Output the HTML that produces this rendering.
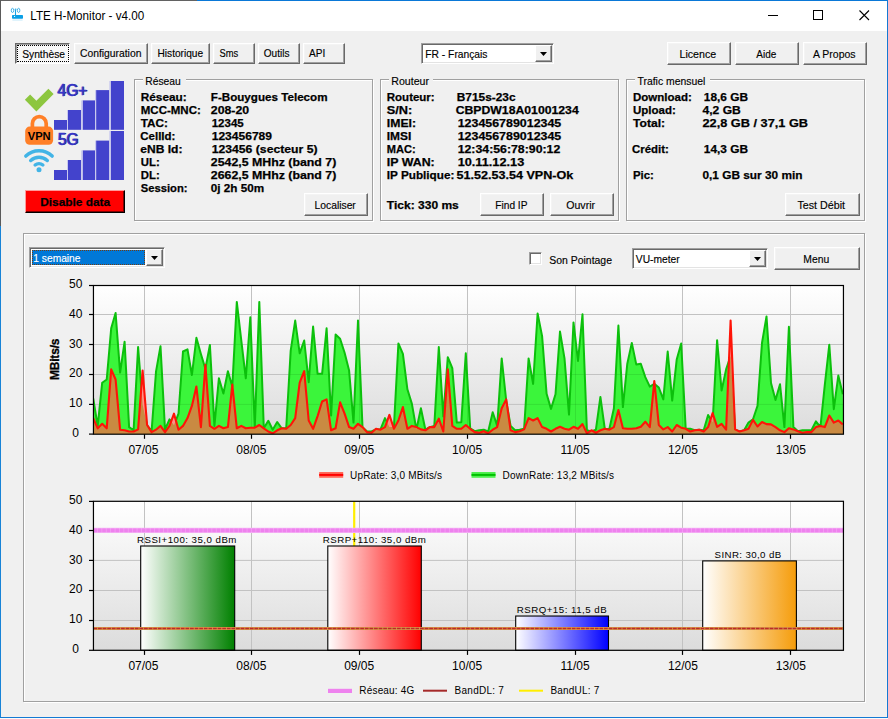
<!DOCTYPE html>
<html lang="fr"><head><meta charset="utf-8"><title>LTE H-Monitor - v4.00</title>
<style>
html,body{margin:0;padding:0}
body{width:888px;height:719px;overflow:hidden;position:relative;background:#f0f0f0;font-family:"Liberation Sans",sans-serif;font-size:11px;color:#000}
.t{position:absolute;white-space:pre;line-height:normal}
.a{position:absolute;box-sizing:border-box}
.btn{position:absolute;box-sizing:border-box;background:#f0f0f0;border:1px solid;border-color:#fff #696969 #696969 #fff;box-shadow:inset -1px -1px 0 #a0a0a0,inset 1px 1px 0 #f4f4f4}
.sunk{position:absolute;box-sizing:border-box;background:#fff;border:1px solid;border-color:#a0a0a0 #fff #fff #a0a0a0;box-shadow:inset 1px 1px 0 #696969,inset -1px -1px 0 #e3e3e3}
.gb{position:absolute;box-sizing:border-box;border:1px solid #a0a0a0;box-shadow:1px 1px 0 #fff,inset 1px 1px 0 #fff}
.gl{position:absolute;background:#f0f0f0;height:12px}
.dd{position:absolute;box-sizing:border-box;background:#f0f0f0;border:1px solid;border-color:#fff #696969 #696969 #fff;box-shadow:inset -1px -1px 0 #a0a0a0}
.dd:after{content:"";position:absolute;left:4px;top:6px;width:7px;height:4px;background:#000;clip-path:polygon(0 0,100% 0,50% 100%)}
svg{position:absolute;left:0;top:0}
</style></head><body>

<div class="a" style="left:0;top:0;width:888px;height:31px;background:#fff"></div>
<div class="a" style="left:0;top:0;width:197px;height:1px;background:#626262"></div>
<div class="a" style="left:197px;top:0;width:691px;height:1px;background:#0a78d7"></div>
<div class="a" style="left:0;top:0;width:1px;height:226px;background:#5a5a5a"></div>
<div class="a" style="left:0;top:226px;width:1px;height:492px;background:#1883d7"></div>
<div class="a" style="left:887px;top:0;width:1px;height:718px;background:#1479d3"></div>
<div class="a" style="left:886px;top:31px;width:1px;height:686px;background:#f6f2f0"></div>
<div class="a" style="left:0;top:717px;width:888px;height:1px;background:#1479d3"></div>
<div class="a" style="left:0;top:718px;width:888px;height:1px;background:#fbfbfb"></div>

<div class="a" style="left:15px;top:43px;width:55px;height:21px;background:#f8f8f8;border:1px solid;border-color:#696969 #fff #fff #696969;box-shadow:inset 1px 1px 0 #a0a0a0"></div>
<div class="a" style="left:17px;top:45px;width:52px;height:17px;border:1px dotted #000"></div>

<div class="btn" style="left:74px;top:43px;width:74px;height:21px"></div>

<div class="btn" style="left:151px;top:43px;width:59px;height:21px"></div>

<div class="btn" style="left:213px;top:43px;width:42px;height:21px"></div>

<div class="btn" style="left:258px;top:43px;width:42px;height:21px"></div>

<div class="btn" style="left:303px;top:43px;width:42px;height:21px"></div>

<div class="sunk" style="left:421px;top:43px;width:133px;height:21px"></div>
<div class="dd" style="left:535px;top:45px;width:17px;height:17px"></div>

<div class="btn" style="left:667px;top:42px;width:64px;height:23px"></div>

<div class="btn" style="left:735px;top:42px;width:64px;height:23px"></div>

<div class="btn" style="left:803px;top:42px;width:64px;height:23px"></div>

<div class="gb" style="left:134px;top:79px;width:239px;height:142px"></div>
<div class="gl" style="left:143px;top:75px;width:43px"></div>

<div class="gb" style="left:380px;top:79px;width:239px;height:142px"></div>
<div class="gl" style="left:389px;top:75px;width:43.7px"></div>

<div class="gb" style="left:626px;top:79px;width:239px;height:142px"></div>
<div class="gl" style="left:635.3px;top:75px;width:74.7px"></div>










































<div class="btn" style="left:304px;top:193px;width:64px;height:23px"></div>

<div class="btn" style="left:480px;top:193px;width:64px;height:23px"></div>

<div class="btn" style="left:550px;top:193px;width:64px;height:23px"></div>

<div class="btn" style="left:785px;top:193px;width:75px;height:23px"></div>

<div class="a" style="left:25px;top:190px;width:100px;height:23px;background:#ff0000;border:1px solid;border-color:#ff9a9a #000 #000 #ff9a9a;box-shadow:inset -1px -1px 0 #800000"></div>

<div class="gb" style="left:23px;top:233px;width:842px;height:469px"></div>
<div class="sunk" style="left:29px;top:247px;width:136px;height:21px"></div>
<div class="a" style="left:32px;top:250px;width:113px;height:15px;background:#0078d7;border:1px dotted #ff8728;outline:0"></div>
<div class="a" style="left:32px;top:250px;width:113px;height:15px;border:1px dotted #000;clip-path:none;opacity:0.55"></div>
<div class="dd" style="left:146px;top:249px;width:17px;height:17px"></div>

<div class="sunk" style="left:529px;top:252px;width:13px;height:13px"></div>

<div class="sunk" style="left:632px;top:248px;width:136px;height:21px"></div>
<div class="dd" style="left:749px;top:250px;width:17px;height:17px"></div>

<div class="btn" style="left:774px;top:247px;width:86px;height:23px"></div>

<svg width="888" height="719" viewBox="0 0 888 719" font-family="Liberation Sans, sans-serif">
<defs>
<linearGradient id="bg" x1="0" y1="0" x2="0" y2="1"><stop offset="0" stop-color="#ffffff"/><stop offset="1" stop-color="#dcdcdc"/></linearGradient>
<linearGradient id="gg" x1="0" y1="0" x2="1" y2="0"><stop offset="0" stop-color="#ffffff"/><stop offset="1" stop-color="#008000"/></linearGradient>
<linearGradient id="gr" x1="0" y1="0" x2="1" y2="0"><stop offset="0" stop-color="#ffffff"/><stop offset="1" stop-color="#ff0000"/></linearGradient>
<linearGradient id="gbl" x1="0" y1="0" x2="1" y2="0"><stop offset="0" stop-color="#ffffff"/><stop offset="1" stop-color="#0000ff"/></linearGradient>
<linearGradient id="go" x1="0" y1="0" x2="1" y2="0"><stop offset="0" stop-color="#ffffff"/><stop offset="1" stop-color="#f59c0a"/></linearGradient>
</defs>
<g fill="none" stroke="#1ba1e2">
<rect x="12" y="15" width="11" height="3.7" rx="0.7" fill="#0a9fe6" stroke="none"/>
<rect x="12.4" y="19.2" width="10.2" height="1.8" fill="#dff3fc" stroke="none"/>
<rect x="14" y="15.9" width="1.1" height="1" fill="#fff" stroke="none"/>
<path d="M15.5 9.3 V15.2" stroke-width="1.1"/>
<ellipse cx="12.5" cy="10.4" rx="1.25" ry="2.1" stroke-width="0.8"/>
<ellipse cx="18.6" cy="10.4" rx="1.25" ry="2.1" stroke-width="0.8"/>
<path d="M14.6 9.3 Q14.9 8.7 15.5 9 Q16.1 8.7 16.5 9.3" stroke-width="0.8"/>
</g>
<g stroke="#000" stroke-width="1" fill="none" shape-rendering="crispEdges">
<path d="M768 15.5 H778"/>
<rect x="813.5" y="10.5" width="9" height="9"/>
</g>
<path d="M859.5 10.5 L869 20 M869 10.5 L859.5 20" stroke="#000" stroke-width="1.1" fill="none"/>
<polygon points="24.9,99.75 30.1,94.5 36.4,100.75 48.4,88.75 53.6,94.1 36.4,111.6" fill="#8dc63f"/>
<rect x="54" y="81" width="70" height="0" fill="#dcdcf4"/>
<rect x="54" y="120" width="13" height="9.8" fill="#4343cc"/>
<rect x="68" y="110" width="13.1" height="19.8" fill="#4343cc"/>
<rect x="82.6" y="100.4" width="12.4" height="29.4" fill="#4343cc"/>
<rect x="96.1" y="90.1" width="13.2" height="39.7" fill="#4343cc"/>
<rect x="110.7" y="81" width="13.3" height="48.8" fill="#4343cc"/>
<rect x="67" y="110" width="1" height="19.8" fill="#c9c9ee"/>
<rect x="81.1" y="100.4" width="1.5" height="29.4" fill="#c9c9ee"/>
<rect x="95" y="90.1" width="1.1" height="39.7" fill="#c9c9ee"/>
<rect x="109.3" y="81" width="1.4" height="48.8" fill="#c9c9ee"/>
<rect x="54" y="131" width="70" height="0" fill="#dcdcf4"/>
<rect x="54" y="170" width="13" height="10" fill="#4343cc"/>
<rect x="68" y="160" width="13.1" height="20" fill="#4343cc"/>
<rect x="82.6" y="150.4" width="12.4" height="29.6" fill="#4343cc"/>
<rect x="96.1" y="140.6" width="13.2" height="39.4" fill="#4343cc"/>
<rect x="110.7" y="131" width="13.3" height="49" fill="#4343cc"/>
<rect x="67" y="160" width="1" height="20" fill="#c9c9ee"/>
<rect x="81.1" y="150.4" width="1.5" height="29.6" fill="#c9c9ee"/>
<rect x="95" y="140.6" width="1.1" height="39.4" fill="#c9c9ee"/>
<rect x="109.3" y="131" width="1.4" height="49" fill="#c9c9ee"/>
<path d="M32.4 128 V123.5 A6.9 6.9 0 0 1 46.2 123.5 V128" fill="none" stroke="#ff7f27" stroke-width="3.7"/>
<rect x="25.2" y="126.6" width="27.9" height="18.2" rx="4.5" fill="#ff7f27"/>
<text x="39.2" y="140" font-size="11" font-weight="bold" text-anchor="middle" fill="#000" textLength="23" lengthAdjust="spacingAndGlyphs">VPN</text>
<g fill="none" stroke="#42b4e6" stroke-width="3.5" stroke-linecap="round">
<path d="M25.85 156.04 A19 19 0 0 1 52.15 156.04"/>
<path d="M30.75 160.49 A12.4 12.4 0 0 1 47.25 160.49"/>
<path d="M35.16 165.01 A6.1 6.1 0 0 1 42.84 165.01"/>
</g>
<circle cx="39" cy="169.75" r="2.5" fill="#42b4e6"/>
<rect x="93.45" y="285.5" width="750" height="148.7" fill="url(#bg)"/>
<path d="M93.45 314.50 H843.45" stroke="#c2c2c2" stroke-width="1"/>
<path d="M93.45 344.50 H843.45" stroke="#c2c2c2" stroke-width="1"/>
<path d="M93.45 374.50 H843.45" stroke="#c2c2c2" stroke-width="1"/>
<path d="M93.45 404.40 H843.45" stroke="#c2c2c2" stroke-width="1"/>
<path d="M144.50 285.5 V434.2" stroke="#c2c2c2" stroke-width="1"/>
<path d="M251.50 285.5 V434.2" stroke="#c2c2c2" stroke-width="1"/>
<path d="M359.50 285.5 V434.2" stroke="#c2c2c2" stroke-width="1"/>
<path d="M467.50 285.5 V434.2" stroke="#c2c2c2" stroke-width="1"/>
<path d="M575.50 285.5 V434.2" stroke="#c2c2c2" stroke-width="1"/>
<path d="M682.50 285.5 V434.2" stroke="#c2c2c2" stroke-width="1"/>
<path d="M790.50 285.5 V434.2" stroke="#c2c2c2" stroke-width="1"/>
<clipPath id="cp"><rect x="93.45" y="283.5" width="750" height="150.7"/></clipPath><g clip-path="url(#cp)">
<clipPath id="cg"><polygon points="93.45,434.2 93.2,398.5 97.7,425.9 102.2,382.7 106.7,379.5 111.2,328.3 115.6,312.9 120.1,372.6 124.6,341.7 129.1,427.1 133.6,430.3 138.1,347.1 142.6,404.5 147.1,425.3 151.6,431.2 156.0,371.7 160.5,346.2 165.0,429.4 169.5,419.3 174.0,425.3 178.5,413.7 183.0,351.5 187.5,349.4 191.9,375.0 196.4,337.8 200.9,353.9 205.4,368.8 209.9,345.0 214.4,425.9 218.9,378.3 223.4,393.5 227.9,371.2 232.3,386.6 236.8,301.9 241.3,340.5 245.8,378.3 250.3,317.3 254.8,427.1 259.3,301.9 263.8,428.3 268.3,420.8 272.7,429.7 277.2,422.0 281.7,428.3 286.2,428.3 290.7,350.6 295.2,320.6 299.7,353.3 304.2,340.5 308.7,382.2 313.1,326.5 317.6,373.8 322.1,373.8 326.6,328.3 331.1,415.5 335.6,334.6 340.1,338.7 344.6,352.7 349.1,370.6 353.5,422.6 358.0,320.6 362.5,427.1 367.0,431.5 371.5,431.5 376.0,429.4 380.5,429.4 385.0,418.1 389.4,427.1 393.9,427.1 398.4,343.5 402.9,353.9 407.4,389.3 411.9,403.9 416.4,429.7 420.9,408.3 425.4,429.7 429.8,427.1 434.3,425.9 438.8,347.1 443.3,416.4 447.8,357.2 452.3,368.2 456.8,422.6 461.3,422.3 465.8,353.3 470.2,428.3 474.7,431.2 479.2,430.3 483.7,429.7 488.2,431.5 492.7,412.2 497.2,425.9 501.7,358.4 506.2,400.6 510.6,425.9 515.1,430.3 519.6,429.7 524.1,428.8 528.6,358.4 533.1,383.9 537.6,313.5 542.1,336.1 546.6,393.8 551.0,408.9 555.5,394.3 560.0,331.6 564.5,358.4 569.0,414.6 573.5,322.4 578.0,361.0 582.5,314.3 586.9,430.3 591.4,431.5 595.9,429.7 600.4,397.0 604.9,429.7 609.4,428.8 613.9,408.3 618.4,325.6 622.9,407.1 627.3,363.7 631.8,342.9 636.3,364.6 640.8,363.7 645.3,377.1 649.8,386.6 654.3,383.9 658.8,387.5 663.3,399.4 667.7,351.5 672.2,400.6 676.7,359.6 681.2,343.5 685.7,428.8 690.2,428.8 694.7,430.3 699.2,429.7 703.7,430.3 708.1,414.9 712.6,422.6 717.1,340.2 721.6,390.5 726.1,369.4 730.6,356.0 735.1,429.7 739.6,431.5 744.1,430.3 748.5,422.6 753.0,419.3 757.5,405.9 762.0,342.9 766.5,316.4 771.0,383.0 775.5,400.0 780.0,384.2 784.4,427.1 788.9,326.8 793.4,427.1 797.9,431.2 802.4,430.3 806.9,430.3 811.4,430.3 815.9,421.4 820.4,427.1 824.8,384.8 829.3,344.7 833.8,409.2 838.3,375.6 842.8,394.3 843.45,434.2"/></clipPath>
<polygon points="93.45,434.2 93.2,398.5 97.7,425.9 102.2,382.7 106.7,379.5 111.2,328.3 115.6,312.9 120.1,372.6 124.6,341.7 129.1,427.1 133.6,430.3 138.1,347.1 142.6,404.5 147.1,425.3 151.6,431.2 156.0,371.7 160.5,346.2 165.0,429.4 169.5,419.3 174.0,425.3 178.5,413.7 183.0,351.5 187.5,349.4 191.9,375.0 196.4,337.8 200.9,353.9 205.4,368.8 209.9,345.0 214.4,425.9 218.9,378.3 223.4,393.5 227.9,371.2 232.3,386.6 236.8,301.9 241.3,340.5 245.8,378.3 250.3,317.3 254.8,427.1 259.3,301.9 263.8,428.3 268.3,420.8 272.7,429.7 277.2,422.0 281.7,428.3 286.2,428.3 290.7,350.6 295.2,320.6 299.7,353.3 304.2,340.5 308.7,382.2 313.1,326.5 317.6,373.8 322.1,373.8 326.6,328.3 331.1,415.5 335.6,334.6 340.1,338.7 344.6,352.7 349.1,370.6 353.5,422.6 358.0,320.6 362.5,427.1 367.0,431.5 371.5,431.5 376.0,429.4 380.5,429.4 385.0,418.1 389.4,427.1 393.9,427.1 398.4,343.5 402.9,353.9 407.4,389.3 411.9,403.9 416.4,429.7 420.9,408.3 425.4,429.7 429.8,427.1 434.3,425.9 438.8,347.1 443.3,416.4 447.8,357.2 452.3,368.2 456.8,422.6 461.3,422.3 465.8,353.3 470.2,428.3 474.7,431.2 479.2,430.3 483.7,429.7 488.2,431.5 492.7,412.2 497.2,425.9 501.7,358.4 506.2,400.6 510.6,425.9 515.1,430.3 519.6,429.7 524.1,428.8 528.6,358.4 533.1,383.9 537.6,313.5 542.1,336.1 546.6,393.8 551.0,408.9 555.5,394.3 560.0,331.6 564.5,358.4 569.0,414.6 573.5,322.4 578.0,361.0 582.5,314.3 586.9,430.3 591.4,431.5 595.9,429.7 600.4,397.0 604.9,429.7 609.4,428.8 613.9,408.3 618.4,325.6 622.9,407.1 627.3,363.7 631.8,342.9 636.3,364.6 640.8,363.7 645.3,377.1 649.8,386.6 654.3,383.9 658.8,387.5 663.3,399.4 667.7,351.5 672.2,400.6 676.7,359.6 681.2,343.5 685.7,428.8 690.2,428.8 694.7,430.3 699.2,429.7 703.7,430.3 708.1,414.9 712.6,422.6 717.1,340.2 721.6,390.5 726.1,369.4 730.6,356.0 735.1,429.7 739.6,431.5 744.1,430.3 748.5,422.6 753.0,419.3 757.5,405.9 762.0,342.9 766.5,316.4 771.0,383.0 775.5,400.0 780.0,384.2 784.4,427.1 788.9,326.8 793.4,427.1 797.9,431.2 802.4,430.3 806.9,430.3 811.4,430.3 815.9,421.4 820.4,427.1 824.8,384.8 829.3,344.7 833.8,409.2 838.3,375.6 842.8,394.3 843.45,434.2" fill="#3bf53b"/>
<g clip-path="url(#cg)" stroke="#006000" stroke-opacity="0.13" stroke-width="1"><path d="M93.45 314.50 H843.45"/><path d="M93.45 344.50 H843.45"/><path d="M93.45 374.50 H843.45"/><path d="M93.45 404.40 H843.45"/><path d="M144.50 285.5 V434.2"/><path d="M251.50 285.5 V434.2"/><path d="M359.50 285.5 V434.2"/><path d="M467.50 285.5 V434.2"/><path d="M575.50 285.5 V434.2"/><path d="M682.50 285.5 V434.2"/><path d="M790.50 285.5 V434.2"/></g>
<polyline points="93.2,398.5 97.7,425.9 102.2,382.7 106.7,379.5 111.2,328.3 115.6,312.9 120.1,372.6 124.6,341.7 129.1,427.1 133.6,430.3 138.1,347.1 142.6,404.5 147.1,425.3 151.6,431.2 156.0,371.7 160.5,346.2 165.0,429.4 169.5,419.3 174.0,425.3 178.5,413.7 183.0,351.5 187.5,349.4 191.9,375.0 196.4,337.8 200.9,353.9 205.4,368.8 209.9,345.0 214.4,425.9 218.9,378.3 223.4,393.5 227.9,371.2 232.3,386.6 236.8,301.9 241.3,340.5 245.8,378.3 250.3,317.3 254.8,427.1 259.3,301.9 263.8,428.3 268.3,420.8 272.7,429.7 277.2,422.0 281.7,428.3 286.2,428.3 290.7,350.6 295.2,320.6 299.7,353.3 304.2,340.5 308.7,382.2 313.1,326.5 317.6,373.8 322.1,373.8 326.6,328.3 331.1,415.5 335.6,334.6 340.1,338.7 344.6,352.7 349.1,370.6 353.5,422.6 358.0,320.6 362.5,427.1 367.0,431.5 371.5,431.5 376.0,429.4 380.5,429.4 385.0,418.1 389.4,427.1 393.9,427.1 398.4,343.5 402.9,353.9 407.4,389.3 411.9,403.9 416.4,429.7 420.9,408.3 425.4,429.7 429.8,427.1 434.3,425.9 438.8,347.1 443.3,416.4 447.8,357.2 452.3,368.2 456.8,422.6 461.3,422.3 465.8,353.3 470.2,428.3 474.7,431.2 479.2,430.3 483.7,429.7 488.2,431.5 492.7,412.2 497.2,425.9 501.7,358.4 506.2,400.6 510.6,425.9 515.1,430.3 519.6,429.7 524.1,428.8 528.6,358.4 533.1,383.9 537.6,313.5 542.1,336.1 546.6,393.8 551.0,408.9 555.5,394.3 560.0,331.6 564.5,358.4 569.0,414.6 573.5,322.4 578.0,361.0 582.5,314.3 586.9,430.3 591.4,431.5 595.9,429.7 600.4,397.0 604.9,429.7 609.4,428.8 613.9,408.3 618.4,325.6 622.9,407.1 627.3,363.7 631.8,342.9 636.3,364.6 640.8,363.7 645.3,377.1 649.8,386.6 654.3,383.9 658.8,387.5 663.3,399.4 667.7,351.5 672.2,400.6 676.7,359.6 681.2,343.5 685.7,428.8 690.2,428.8 694.7,430.3 699.2,429.7 703.7,430.3 708.1,414.9 712.6,422.6 717.1,340.2 721.6,390.5 726.1,369.4 730.6,356.0 735.1,429.7 739.6,431.5 744.1,430.3 748.5,422.6 753.0,419.3 757.5,405.9 762.0,342.9 766.5,316.4 771.0,383.0 775.5,400.0 780.0,384.2 784.4,427.1 788.9,326.8 793.4,427.1 797.9,431.2 802.4,430.3 806.9,430.3 811.4,430.3 815.9,421.4 820.4,427.1 824.8,384.8 829.3,344.7 833.8,409.2 838.3,375.6 842.8,394.3" fill="none" stroke="#0cc00c" stroke-width="2" stroke-linejoin="round"/>
<polygon points="93.45,434.2 93.2,418.1 97.7,428.3 102.2,423.8 106.7,428.3 111.2,369.4 115.6,379.5 120.1,429.7 124.6,430.3 129.1,431.5 133.6,431.5 138.1,429.4 142.6,370.6 147.1,425.0 151.6,432.1 156.0,429.7 160.5,425.9 165.0,432.1 169.5,425.9 174.0,413.7 178.5,429.7 183.0,425.9 187.5,418.1 191.9,405.9 196.4,386.6 200.9,427.1 205.4,364.9 209.9,425.9 214.4,428.8 218.9,425.9 223.4,428.3 227.9,427.1 232.3,384.5 236.8,428.3 241.3,425.9 245.8,428.3 250.3,427.7 254.8,427.7 259.3,425.0 263.8,428.3 268.3,431.5 272.7,433.3 277.2,430.3 281.7,428.3 286.2,428.8 290.7,425.0 295.2,418.1 299.7,382.7 304.2,371.2 308.7,420.5 313.1,428.8 317.6,416.1 322.1,401.5 326.6,399.4 331.1,430.3 335.6,428.3 340.1,402.4 344.6,413.7 349.1,427.1 353.5,428.8 358.0,423.8 362.5,427.1 367.0,432.1 371.5,432.7 376.0,428.8 380.5,429.7 385.0,427.1 389.4,414.9 393.9,428.8 398.4,420.5 402.9,407.1 407.4,428.8 411.9,425.9 416.4,427.1 420.9,429.4 425.4,430.3 429.8,427.1 434.3,427.1 438.8,418.7 443.3,431.5 447.8,369.4 452.3,425.9 456.8,428.8 461.3,428.8 465.8,425.0 470.2,428.8 474.7,432.1 479.2,432.7 483.7,431.2 488.2,433.3 492.7,429.7 497.2,427.1 501.7,408.3 506.2,399.4 510.6,430.3 515.1,432.1 519.6,431.2 524.1,429.4 528.6,418.1 533.1,420.5 537.6,418.1 542.1,427.1 546.6,428.8 551.0,431.5 555.5,428.8 560.0,426.8 564.5,428.8 569.0,429.7 573.5,426.8 578.0,428.8 582.5,424.1 586.9,433.3 591.4,430.3 595.9,432.7 600.4,430.3 604.9,428.8 609.4,429.7 613.9,427.1 618.4,410.1 622.9,428.3 627.3,428.8 631.8,428.8 636.3,428.3 640.8,426.8 645.3,421.7 649.8,427.1 654.3,381.0 658.8,425.0 663.3,429.4 667.7,427.1 672.2,431.5 676.7,425.0 681.2,427.7 685.7,428.8 690.2,431.5 694.7,430.3 699.2,429.7 703.7,431.5 708.1,427.1 712.6,413.1 717.1,426.8 721.6,423.8 726.1,429.7 730.6,320.6 735.1,429.4 739.6,431.5 744.1,430.3 748.5,428.8 753.0,419.9 757.5,426.5 762.0,422.0 766.5,424.1 771.0,424.4 775.5,427.1 780.0,430.3 784.4,432.1 788.9,428.3 793.4,429.4 797.9,431.2 802.4,432.7 806.9,432.1 811.4,432.1 815.9,427.1 820.4,425.9 824.8,427.1 829.3,415.5 833.8,422.6 838.3,420.5 842.8,424.4 843.45,434.2" fill="#ff9088"/>
<polygon points="93.45,434.2 93.2,418.1 97.7,428.3 102.2,423.8 106.7,428.3 111.2,369.4 115.6,379.5 120.1,429.7 124.6,430.3 129.1,431.5 133.6,431.5 138.1,429.4 142.6,370.6 147.1,425.0 151.6,432.1 156.0,429.7 160.5,425.9 165.0,432.1 169.5,425.9 174.0,413.7 178.5,429.7 183.0,425.9 187.5,418.1 191.9,405.9 196.4,386.6 200.9,427.1 205.4,364.9 209.9,425.9 214.4,428.8 218.9,425.9 223.4,428.3 227.9,427.1 232.3,384.5 236.8,428.3 241.3,425.9 245.8,428.3 250.3,427.7 254.8,427.7 259.3,425.0 263.8,428.3 268.3,431.5 272.7,433.3 277.2,430.3 281.7,428.3 286.2,428.8 290.7,425.0 295.2,418.1 299.7,382.7 304.2,371.2 308.7,420.5 313.1,428.8 317.6,416.1 322.1,401.5 326.6,399.4 331.1,430.3 335.6,428.3 340.1,402.4 344.6,413.7 349.1,427.1 353.5,428.8 358.0,423.8 362.5,427.1 367.0,432.1 371.5,432.7 376.0,428.8 380.5,429.7 385.0,427.1 389.4,414.9 393.9,428.8 398.4,420.5 402.9,407.1 407.4,428.8 411.9,425.9 416.4,427.1 420.9,429.4 425.4,430.3 429.8,427.1 434.3,427.1 438.8,418.7 443.3,431.5 447.8,369.4 452.3,425.9 456.8,428.8 461.3,428.8 465.8,425.0 470.2,428.8 474.7,432.1 479.2,432.7 483.7,431.2 488.2,433.3 492.7,429.7 497.2,427.1 501.7,408.3 506.2,399.4 510.6,430.3 515.1,432.1 519.6,431.2 524.1,429.4 528.6,418.1 533.1,420.5 537.6,418.1 542.1,427.1 546.6,428.8 551.0,431.5 555.5,428.8 560.0,426.8 564.5,428.8 569.0,429.7 573.5,426.8 578.0,428.8 582.5,424.1 586.9,433.3 591.4,430.3 595.9,432.7 600.4,430.3 604.9,428.8 609.4,429.7 613.9,427.1 618.4,410.1 622.9,428.3 627.3,428.8 631.8,428.8 636.3,428.3 640.8,426.8 645.3,421.7 649.8,427.1 654.3,381.0 658.8,425.0 663.3,429.4 667.7,427.1 672.2,431.5 676.7,425.0 681.2,427.7 685.7,428.8 690.2,431.5 694.7,430.3 699.2,429.7 703.7,431.5 708.1,427.1 712.6,413.1 717.1,426.8 721.6,423.8 726.1,429.7 730.6,320.6 735.1,429.4 739.6,431.5 744.1,430.3 748.5,428.8 753.0,419.9 757.5,426.5 762.0,422.0 766.5,424.1 771.0,424.4 775.5,427.1 780.0,430.3 784.4,432.1 788.9,428.3 793.4,429.4 797.9,431.2 802.4,432.7 806.9,432.1 811.4,432.1 815.9,427.1 820.4,425.9 824.8,427.1 829.3,415.5 833.8,422.6 838.3,420.5 842.8,424.4 843.45,434.2" fill="#c98a42" clip-path="url(#cg)"/>
<polyline points="93.2,418.1 97.7,428.3 102.2,423.8 106.7,428.3 111.2,369.4 115.6,379.5 120.1,429.7 124.6,430.3 129.1,431.5 133.6,431.5 138.1,429.4 142.6,370.6 147.1,425.0 151.6,432.1 156.0,429.7 160.5,425.9 165.0,432.1 169.5,425.9 174.0,413.7 178.5,429.7 183.0,425.9 187.5,418.1 191.9,405.9 196.4,386.6 200.9,427.1 205.4,364.9 209.9,425.9 214.4,428.8 218.9,425.9 223.4,428.3 227.9,427.1 232.3,384.5 236.8,428.3 241.3,425.9 245.8,428.3 250.3,427.7 254.8,427.7 259.3,425.0 263.8,428.3 268.3,431.5 272.7,433.3 277.2,430.3 281.7,428.3 286.2,428.8 290.7,425.0 295.2,418.1 299.7,382.7 304.2,371.2 308.7,420.5 313.1,428.8 317.6,416.1 322.1,401.5 326.6,399.4 331.1,430.3 335.6,428.3 340.1,402.4 344.6,413.7 349.1,427.1 353.5,428.8 358.0,423.8 362.5,427.1 367.0,432.1 371.5,432.7 376.0,428.8 380.5,429.7 385.0,427.1 389.4,414.9 393.9,428.8 398.4,420.5 402.9,407.1 407.4,428.8 411.9,425.9 416.4,427.1 420.9,429.4 425.4,430.3 429.8,427.1 434.3,427.1 438.8,418.7 443.3,431.5 447.8,369.4 452.3,425.9 456.8,428.8 461.3,428.8 465.8,425.0 470.2,428.8 474.7,432.1 479.2,432.7 483.7,431.2 488.2,433.3 492.7,429.7 497.2,427.1 501.7,408.3 506.2,399.4 510.6,430.3 515.1,432.1 519.6,431.2 524.1,429.4 528.6,418.1 533.1,420.5 537.6,418.1 542.1,427.1 546.6,428.8 551.0,431.5 555.5,428.8 560.0,426.8 564.5,428.8 569.0,429.7 573.5,426.8 578.0,428.8 582.5,424.1 586.9,433.3 591.4,430.3 595.9,432.7 600.4,430.3 604.9,428.8 609.4,429.7 613.9,427.1 618.4,410.1 622.9,428.3 627.3,428.8 631.8,428.8 636.3,428.3 640.8,426.8 645.3,421.7 649.8,427.1 654.3,381.0 658.8,425.0 663.3,429.4 667.7,427.1 672.2,431.5 676.7,425.0 681.2,427.7 685.7,428.8 690.2,431.5 694.7,430.3 699.2,429.7 703.7,431.5 708.1,427.1 712.6,413.1 717.1,426.8 721.6,423.8 726.1,429.7 730.6,320.6 735.1,429.4 739.6,431.5 744.1,430.3 748.5,428.8 753.0,419.9 757.5,426.5 762.0,422.0 766.5,424.1 771.0,424.4 775.5,427.1 780.0,430.3 784.4,432.1 788.9,428.3 793.4,429.4 797.9,431.2 802.4,432.7 806.9,432.1 811.4,432.1 815.9,427.1 820.4,425.9 824.8,427.1 829.3,415.5 833.8,422.6 838.3,420.5 842.8,424.4" fill="none" stroke="#ff1408" stroke-width="2.1" stroke-linejoin="round"/>
</g>
<rect x="93.45" y="285.5" width="750" height="148.7" fill="none" stroke="#000" stroke-width="1.2"/>
<path d="M89 285.50 H93.45" stroke="#000" stroke-width="1.2"/>
<text x="75.7" y="288.10" font-size="12" text-anchor="middle">50</text>
<path d="M89 314.50 H93.45" stroke="#000" stroke-width="1.2"/>
<text x="75.7" y="317.84" font-size="12" text-anchor="middle">40</text>
<path d="M89 344.50 H93.45" stroke="#000" stroke-width="1.2"/>
<text x="75.7" y="347.58" font-size="12" text-anchor="middle">30</text>
<path d="M89 374.50 H93.45" stroke="#000" stroke-width="1.2"/>
<text x="75.7" y="377.32" font-size="12" text-anchor="middle">20</text>
<path d="M89 404.40 H93.45" stroke="#000" stroke-width="1.2"/>
<text x="75.7" y="407.06" font-size="12" text-anchor="middle">10</text>
<path d="M89 434.10 H93.45" stroke="#000" stroke-width="1.2"/>
<text x="75.7" y="436.80" font-size="12" text-anchor="middle">0</text>
<path d="M144.50 434.2 V438.8" stroke="#000" stroke-width="1.2"/>
<text x="143.40" y="453.6" font-size="12" text-anchor="middle">07/05</text>
<path d="M251.50 434.2 V438.8" stroke="#000" stroke-width="1.2"/>
<text x="251.30" y="453.6" font-size="12" text-anchor="middle">08/05</text>
<path d="M359.50 434.2 V438.8" stroke="#000" stroke-width="1.2"/>
<text x="359.20" y="453.6" font-size="12" text-anchor="middle">09/05</text>
<path d="M467.50 434.2 V438.8" stroke="#000" stroke-width="1.2"/>
<text x="467.10" y="453.6" font-size="12" text-anchor="middle">10/05</text>
<path d="M575.50 434.2 V438.8" stroke="#000" stroke-width="1.2"/>
<text x="575.00" y="453.6" font-size="12" text-anchor="middle">11/05</text>
<path d="M682.50 434.2 V438.8" stroke="#000" stroke-width="1.2"/>
<text x="682.90" y="453.6" font-size="12" text-anchor="middle">12/05</text>
<path d="M790.50 434.2 V438.8" stroke="#000" stroke-width="1.2"/>
<text x="790.80" y="453.6" font-size="12" text-anchor="middle">13/05</text>
<text transform="translate(58.6,359.3) rotate(-90)" font-size="12" font-weight="bold" stroke="#000" stroke-width="0.3" text-anchor="middle" textLength="41.6" lengthAdjust="spacing">MBits/s</text>
<rect x="319.2" y="472" width="24" height="5.8" fill="#ff6a5a"/><rect x="319.2" y="473.9" width="24" height="2" fill="#ff0000"/>
<text x="350" y="478.6" font-size="10" textLength="92" lengthAdjust="spacing">UpRate: 3,0 MBits/s</text>
<rect x="471.5" y="472" width="24" height="5.8" fill="#50f050"/><rect x="471.5" y="473.9" width="24" height="2" fill="#00c000"/>
<text x="502.6" y="478.6" font-size="10" textLength="111.5" lengthAdjust="spacing">DownRate: 13,2 MBits/s</text>
<rect x="93.45" y="501.3" width="750" height="149" fill="url(#bg)"/>
<path d="M93.45 530.50 H843.45" stroke="#c2c2c2" stroke-width="1"/>
<path d="M93.45 560.40 H843.45" stroke="#c2c2c2" stroke-width="1"/>
<path d="M93.45 590.50 H843.45" stroke="#c2c2c2" stroke-width="1"/>
<path d="M93.45 620.50 H843.45" stroke="#c2c2c2" stroke-width="1"/>
<path d="M144.50 501.3 V650.3" stroke="#c2c2c2" stroke-width="1"/>
<path d="M251.50 501.3 V650.3" stroke="#c2c2c2" stroke-width="1"/>
<path d="M359.50 501.3 V650.3" stroke="#c2c2c2" stroke-width="1"/>
<path d="M467.50 501.3 V650.3" stroke="#c2c2c2" stroke-width="1"/>
<path d="M575.50 501.3 V650.3" stroke="#c2c2c2" stroke-width="1"/>
<path d="M682.50 501.3 V650.3" stroke="#c2c2c2" stroke-width="1"/>
<path d="M790.50 501.3 V650.3" stroke="#c2c2c2" stroke-width="1"/>
<path d="M354.2 501.3 V546" stroke="#ffee00" stroke-width="2.2"/>
<rect x="140.7" y="546.00" width="94" height="104.30" fill="url(#gg)" stroke="#000" stroke-width="1.1"/>
<text x="137" y="542.80" font-size="9.7" textLength="99.4" lengthAdjust="spacing">RSSI+100: 35,0 dBm</text>
<rect x="327.8" y="546.00" width="93.5" height="104.30" fill="url(#gr)" stroke="#000" stroke-width="1.1"/>
<text x="322.8" y="542.80" font-size="9.7" textLength="103" lengthAdjust="spacing">RSRP+110: 35,0 dBm</text>
<rect x="515.7" y="616.03" width="92.8" height="34.27" fill="url(#gbl)" stroke="#000" stroke-width="1.1"/>
<text x="516.7" y="612.83" font-size="9.7" textLength="90" lengthAdjust="spacing">RSRQ+15: 11,5 dB</text>
<rect x="702.7" y="560.90" width="93.7" height="89.40" fill="url(#go)" stroke="#000" stroke-width="1.1"/>
<text x="714.6" y="557.70" font-size="9.7" textLength="66.6" lengthAdjust="spacing">SINR: 30,0 dB</text>
<path d="M93.45 530.40 H843.45" stroke="#f6b8f6" stroke-width="5.2"/>
<path d="M93.45 530.40 H843.45" stroke="#f3a0f3" stroke-width="3.8"/>
<path d="M93.45 530.40 H843.45" stroke="#ee82ee" stroke-width="3.8" stroke-dasharray="3.6 0.8"/>
<path d="M93.45 628.50 H843.45" stroke="#d89848" stroke-width="3"/>
<path d="M93.45 628.50 H843.45" stroke="#bc2a2a" stroke-width="1.3" stroke-dasharray="3.7 0.9"/>
<rect x="93.45" y="501.3" width="750" height="149" fill="none" stroke="#000" stroke-width="1.2"/>
<path d="M89 501.40 H93.45" stroke="#000" stroke-width="1.2"/>
<text x="75.7" y="503.90" font-size="12" text-anchor="middle">50</text>
<path d="M89 530.50 H93.45" stroke="#000" stroke-width="1.2"/>
<text x="75.7" y="533.70" font-size="12" text-anchor="middle">40</text>
<path d="M89 560.40 H93.45" stroke="#000" stroke-width="1.2"/>
<text x="75.7" y="563.50" font-size="12" text-anchor="middle">30</text>
<path d="M89 590.50 H93.45" stroke="#000" stroke-width="1.2"/>
<text x="75.7" y="593.30" font-size="12" text-anchor="middle">20</text>
<path d="M89 620.50 H93.45" stroke="#000" stroke-width="1.2"/>
<text x="75.7" y="623.10" font-size="12" text-anchor="middle">10</text>
<path d="M89 650.30 H93.45" stroke="#000" stroke-width="1.2"/>
<text x="75.7" y="652.90" font-size="12" text-anchor="middle">0</text>
<path d="M144.50 650.3 V654.9" stroke="#000" stroke-width="1.2"/>
<text x="143.40" y="669.7" font-size="12" text-anchor="middle">07/05</text>
<path d="M251.50 650.3 V654.9" stroke="#000" stroke-width="1.2"/>
<text x="251.30" y="669.7" font-size="12" text-anchor="middle">08/05</text>
<path d="M359.50 650.3 V654.9" stroke="#000" stroke-width="1.2"/>
<text x="359.20" y="669.7" font-size="12" text-anchor="middle">09/05</text>
<path d="M467.50 650.3 V654.9" stroke="#000" stroke-width="1.2"/>
<text x="467.10" y="669.7" font-size="12" text-anchor="middle">10/05</text>
<path d="M575.50 650.3 V654.9" stroke="#000" stroke-width="1.2"/>
<text x="575.00" y="669.7" font-size="12" text-anchor="middle">11/05</text>
<path d="M682.50 650.3 V654.9" stroke="#000" stroke-width="1.2"/>
<text x="682.90" y="669.7" font-size="12" text-anchor="middle">12/05</text>
<path d="M790.50 650.3 V654.9" stroke="#000" stroke-width="1.2"/>
<text x="790.80" y="669.7" font-size="12" text-anchor="middle">13/05</text>
<rect x="328" y="688.8" width="24" height="4.2" fill="#ee82ee"/>
<text x="359.3" y="694" font-size="10" textLength="55" lengthAdjust="spacing">Réseau: 4G</text>
<rect x="423" y="689.7" width="24" height="2" fill="#a52a2a"/>
<text x="454.6" y="694" font-size="10" textLength="49.3" lengthAdjust="spacing">BandDL: 7</text>
<rect x="519" y="689.7" width="24" height="2" fill="#ffee00"/>
<text x="550.4" y="694" font-size="10" textLength="49" lengthAdjust="spacing">BandUL: 7</text>
</svg>
<svg width="888" height="719" viewBox="0 0 888 719" font-family="Liberation Sans, sans-serif" style="pointer-events:none">
<text x="30.30" y="19.90" font-size="12" fill="#000" textLength="113.92" lengthAdjust="spacingAndGlyphs" >LTE H-Monitor - v4.00</text>
<text x="22.20" y="58.00" font-size="11" fill="#000" stroke="#000" stroke-width="0.15" textLength="42.79" lengthAdjust="spacingAndGlyphs" >Synthèse</text>
<text x="80.00" y="57.00" font-size="11" fill="#000" stroke="#000" stroke-width="0.15" textLength="61.40" lengthAdjust="spacingAndGlyphs" >Configuration</text>
<text x="157.50" y="57.00" font-size="11" fill="#000" stroke="#000" stroke-width="0.15" textLength="45.62" lengthAdjust="spacingAndGlyphs" >Historique</text>
<text x="219.40" y="57.00" font-size="11" fill="#000" stroke="#000" stroke-width="0.15" textLength="18.70" lengthAdjust="spacingAndGlyphs" >Sms</text>
<text x="263.75" y="57.00" font-size="11" fill="#000" stroke="#000" stroke-width="0.15" textLength="25.65" lengthAdjust="spacingAndGlyphs" >Outils</text>
<text x="309.00" y="57.00" font-size="11" fill="#000" stroke="#000" stroke-width="0.15" textLength="16.23" lengthAdjust="spacingAndGlyphs" >API</text>
<text x="425.30" y="58.00" font-size="11" fill="#000" stroke="#000" stroke-width="0.15" textLength="62.20" lengthAdjust="spacingAndGlyphs" >FR - Français</text>
<text x="679.50" y="57.50" font-size="11" fill="#000" stroke="#000" stroke-width="0.15" textLength="36.73" lengthAdjust="spacingAndGlyphs" >Licence</text>
<text x="756.25" y="57.50" font-size="11" fill="#000" stroke="#000" stroke-width="0.15" textLength="20.02" lengthAdjust="spacingAndGlyphs" >Aide</text>
<text x="813.00" y="57.50" font-size="11" fill="#000" stroke="#000" stroke-width="0.15" textLength="42.52" lengthAdjust="spacingAndGlyphs" >A Propos</text>
<text x="145.30" y="85.00" font-size="11" fill="#000" stroke="#000" stroke-width="0.15" textLength="35.48" lengthAdjust="spacingAndGlyphs" >Réseau</text>
<text x="391.30" y="85.00" font-size="11" fill="#000" stroke="#000" stroke-width="0.15" textLength="37.71" lengthAdjust="spacingAndGlyphs" >Routeur</text>
<text x="637.50" y="85.00" font-size="11" fill="#000" stroke="#000" stroke-width="0.15" textLength="67.78" lengthAdjust="spacingAndGlyphs" >Trafic mensuel</text>
<text x="140.80" y="100.60" font-size="11.6" font-weight="bold" fill="#000" stroke="#000" stroke-width="0.25" textLength="45.88" lengthAdjust="spacingAndGlyphs" >Réseau:</text>
<text x="140.80" y="113.60" font-size="11.6" font-weight="bold" fill="#000" stroke="#000" stroke-width="0.25" textLength="60.00" lengthAdjust="spacingAndGlyphs" >MCC-MNC:</text>
<text x="140.80" y="126.60" font-size="11.6" font-weight="bold" fill="#000" stroke="#000" stroke-width="0.25" textLength="27.23" lengthAdjust="spacingAndGlyphs" >TAC:</text>
<text x="140.30" y="139.60" font-size="11.6" font-weight="bold" fill="#000" stroke="#000" stroke-width="0.25" textLength="35.02" lengthAdjust="spacingAndGlyphs" >CellId:</text>
<text x="140.30" y="152.60" font-size="11.6" font-weight="bold" fill="#000" stroke="#000" stroke-width="0.25" textLength="42.20" lengthAdjust="spacingAndGlyphs" >eNB Id:</text>
<text x="140.80" y="165.60" font-size="11.6" font-weight="bold" fill="#000" stroke="#000" stroke-width="0.25" textLength="18.89" lengthAdjust="spacingAndGlyphs" >UL:</text>
<text x="140.80" y="178.60" font-size="11.6" font-weight="bold" fill="#000" stroke="#000" stroke-width="0.25" textLength="18.89" lengthAdjust="spacingAndGlyphs" >DL:</text>
<text x="140.80" y="191.60" font-size="11.6" font-weight="bold" fill="#000" stroke="#000" stroke-width="0.25" textLength="46.71" lengthAdjust="spacingAndGlyphs" >Session:</text>
<text x="210.80" y="100.60" font-size="11.6" font-weight="bold" fill="#000" stroke="#000" stroke-width="0.25" textLength="116.71" lengthAdjust="spacingAndGlyphs" >F-Bouygues Telecom</text>
<text x="210.80" y="113.60" font-size="11.6" font-weight="bold" fill="#000" stroke="#000" stroke-width="0.25" textLength="38.41" lengthAdjust="spacingAndGlyphs" >208-20</text>
<text x="211.70" y="126.60" font-size="11.6" font-weight="bold" fill="#000" stroke="#000" stroke-width="0.25" textLength="32.01" lengthAdjust="spacingAndGlyphs" >12345</text>
<text x="211.70" y="139.60" font-size="11.6" font-weight="bold" fill="#000" stroke="#000" stroke-width="0.25" textLength="60.30" lengthAdjust="spacingAndGlyphs" >123456789</text>
<text x="211.70" y="152.60" font-size="11.6" font-weight="bold" fill="#000" stroke="#000" stroke-width="0.25" textLength="105.80" lengthAdjust="spacingAndGlyphs" >123456 (secteur 5)</text>
<text x="210.80" y="165.60" font-size="11.6" font-weight="bold" fill="#000" stroke="#000" stroke-width="0.25" textLength="125.52" lengthAdjust="spacingAndGlyphs" >2542,5 MHhz (band 7)</text>
<text x="210.80" y="178.60" font-size="11.6" font-weight="bold" fill="#000" stroke="#000" stroke-width="0.25" textLength="125.52" lengthAdjust="spacingAndGlyphs" >2662,5 MHhz (band 7)</text>
<text x="210.80" y="191.60" font-size="11.6" font-weight="bold" fill="#000" stroke="#000" stroke-width="0.25" textLength="53.39" lengthAdjust="spacingAndGlyphs" >0j 2h 50m</text>
<text x="386.80" y="100.60" font-size="11.6" font-weight="bold" fill="#000" stroke="#000" stroke-width="0.25" textLength="47.89" lengthAdjust="spacingAndGlyphs" >Routeur:</text>
<text x="386.80" y="113.60" font-size="11.6" font-weight="bold" fill="#000" stroke="#000" stroke-width="0.25" textLength="25.50" lengthAdjust="spacingAndGlyphs" >S/N:</text>
<text x="386.80" y="126.60" font-size="11.6" font-weight="bold" fill="#000" stroke="#000" stroke-width="0.25" textLength="29.22" lengthAdjust="spacingAndGlyphs" >IMEI:</text>
<text x="386.80" y="139.60" font-size="11.6" font-weight="bold" fill="#000" stroke="#000" stroke-width="0.25" textLength="24.52" lengthAdjust="spacingAndGlyphs" >IMSI</text>
<text x="386.80" y="152.60" font-size="11.6" font-weight="bold" fill="#000" stroke="#000" stroke-width="0.25" textLength="28.87" lengthAdjust="spacingAndGlyphs" >MAC:</text>
<text x="386.80" y="165.60" font-size="11.6" font-weight="bold" fill="#000" stroke="#000" stroke-width="0.25" textLength="47.90" lengthAdjust="spacingAndGlyphs" >IP WAN:</text>
<text x="386.80" y="178.60" font-size="11.6" font-weight="bold" fill="#000" stroke="#000" stroke-width="0.25" textLength="67.52" lengthAdjust="spacingAndGlyphs" >IP Publique:</text>
<text x="456.80" y="100.60" font-size="11.6" font-weight="bold" fill="#000" stroke="#000" stroke-width="0.25" textLength="58.72" lengthAdjust="spacingAndGlyphs" >B715s-23c</text>
<text x="455.70" y="113.60" font-size="11.6" font-weight="bold" fill="#000" stroke="#000" stroke-width="0.25" textLength="123.02" lengthAdjust="spacingAndGlyphs" >CBPDW18A01001234</text>
<text x="457.70" y="126.60" font-size="11.6" font-weight="bold" fill="#000" stroke="#000" stroke-width="0.25" textLength="103.57" lengthAdjust="spacingAndGlyphs" >123456789012345</text>
<text x="457.70" y="139.60" font-size="11.6" font-weight="bold" fill="#000" stroke="#000" stroke-width="0.25" textLength="103.57" lengthAdjust="spacingAndGlyphs" >123456789012345</text>
<text x="457.70" y="152.60" font-size="11.6" font-weight="bold" fill="#000" stroke="#000" stroke-width="0.25" textLength="102.60" lengthAdjust="spacingAndGlyphs" >12:34:56:78:90:12</text>
<text x="457.70" y="165.60" font-size="11.6" font-weight="bold" fill="#000" stroke="#000" stroke-width="0.25" textLength="66.52" lengthAdjust="spacingAndGlyphs" >10.11.12.13</text>
<text x="456.50" y="178.60" font-size="11.6" font-weight="bold" fill="#000" stroke="#000" stroke-width="0.25" textLength="116.78" lengthAdjust="spacingAndGlyphs" >51.52.53.54 VPN-Ok</text>
<text x="386.80" y="208.70" font-size="11.6" font-weight="bold" fill="#000" stroke="#000" stroke-width="0.25" textLength="72.01" lengthAdjust="spacingAndGlyphs" >Tick: 330 ms</text>
<text x="633.00" y="100.60" font-size="11.6" font-weight="bold" fill="#000" stroke="#000" stroke-width="0.25" textLength="58.73" lengthAdjust="spacingAndGlyphs" >Download:</text>
<text x="703.80" y="100.60" font-size="11.6" font-weight="bold" fill="#000" stroke="#000" stroke-width="0.25" textLength="44.18" lengthAdjust="spacingAndGlyphs" >18,6 GB</text>
<text x="633.00" y="113.60" font-size="11.6" font-weight="bold" fill="#000" stroke="#000" stroke-width="0.25" textLength="42.81" lengthAdjust="spacingAndGlyphs" >Upload:</text>
<text x="702.50" y="113.60" font-size="11.6" font-weight="bold" fill="#000" stroke="#000" stroke-width="0.25" textLength="38.31" lengthAdjust="spacingAndGlyphs" >4,2 GB</text>
<text x="633.00" y="126.60" font-size="11.6" font-weight="bold" fill="#000" stroke="#000" stroke-width="0.25" textLength="32.03" lengthAdjust="spacingAndGlyphs" >Total:</text>
<text x="702.50" y="126.60" font-size="11.6" font-weight="bold" fill="#000" stroke="#000" stroke-width="0.25" textLength="105.52" lengthAdjust="spacingAndGlyphs" >22,8 GB / 37,1 GB</text>
<text x="632.00" y="152.60" font-size="11.6" font-weight="bold" fill="#000" stroke="#000" stroke-width="0.25" textLength="36.72" lengthAdjust="spacingAndGlyphs" >Crédit:</text>
<text x="703.80" y="152.60" font-size="11.6" font-weight="bold" fill="#000" stroke="#000" stroke-width="0.25" textLength="44.18" lengthAdjust="spacingAndGlyphs" >14,3 GB</text>
<text x="633.00" y="178.60" font-size="11.6" font-weight="bold" fill="#000" stroke="#000" stroke-width="0.25" textLength="20.81" lengthAdjust="spacingAndGlyphs" >Pic:</text>
<text x="702.50" y="178.60" font-size="11.6" font-weight="bold" fill="#000" stroke="#000" stroke-width="0.25" textLength="100.01" lengthAdjust="spacingAndGlyphs" >0,1 GB sur 30 min</text>
<text x="314.50" y="208.60" font-size="11" fill="#000" stroke="#000" stroke-width="0.15" textLength="41.32" lengthAdjust="spacingAndGlyphs" >Localiser</text>
<text x="495.30" y="208.60" font-size="11" fill="#000" stroke="#000" stroke-width="0.15" textLength="32.18" lengthAdjust="spacingAndGlyphs" >Find IP</text>
<text x="566.30" y="208.60" font-size="11" fill="#000" stroke="#000" stroke-width="0.15" textLength="28.71" lengthAdjust="spacingAndGlyphs" >Ouvrir</text>
<text x="797.50" y="208.60" font-size="11" fill="#000" stroke="#000" stroke-width="0.15" textLength="47.48" lengthAdjust="spacingAndGlyphs" >Test Débit</text>
<text x="40.25" y="205.60" font-size="11.6" font-weight="bold" fill="#000" stroke="#000" stroke-width="0.25" textLength="69.92" lengthAdjust="spacingAndGlyphs" >Disable data</text>
<text x="58.00" y="95.70" font-size="16" fill="#26267c" stroke="#26267c" stroke-width="0.2" textLength="30.00" lengthAdjust="spacingAndGlyphs" >4G+</text>
<text x="57.00" y="95.70" font-size="16" fill="#3636cc" stroke="#3636cc" stroke-width="0.3" textLength="30.00" lengthAdjust="spacingAndGlyphs" >4G+</text>
<text x="58.40" y="145.40" font-size="16" fill="#26267c" stroke="#26267c" stroke-width="0.2" textLength="20.77" lengthAdjust="spacingAndGlyphs" >5G</text>
<text x="57.40" y="145.40" font-size="16" fill="#3636cc" stroke="#3636cc" stroke-width="0.3" textLength="20.77" lengthAdjust="spacingAndGlyphs" >5G</text>
<text x="33.30" y="261.50" font-size="11" fill="#fff" stroke="#fff" stroke-width="0.15" textLength="47.20" lengthAdjust="spacingAndGlyphs" >1 semaine</text>
<text x="549.20" y="263.50" font-size="11" fill="#000" stroke="#000" stroke-width="0.15" textLength="62.80" lengthAdjust="spacingAndGlyphs" >Son Pointage</text>
<text x="635.80" y="262.70" font-size="11" fill="#000" stroke="#000" stroke-width="0.15" textLength="43.90" lengthAdjust="spacingAndGlyphs" >VU-meter</text>
<text x="803.30" y="262.50" font-size="11" fill="#000" stroke="#000" stroke-width="0.15" textLength="25.92" lengthAdjust="spacingAndGlyphs" >Menu</text>
</svg>
</body></html>
